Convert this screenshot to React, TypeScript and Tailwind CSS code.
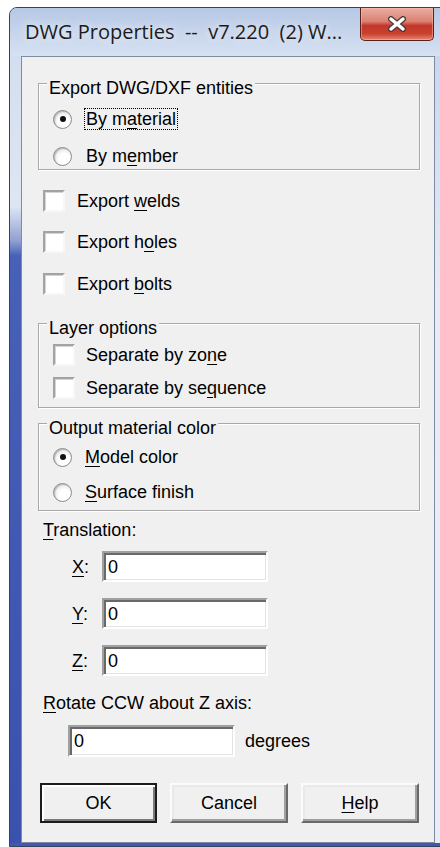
import type { ReactNode } from 'react';

const ui = "font-['Liberation_Sans',Arial,sans-serif] text-[18px] leading-[20px] text-black";

function Key({ children }: { children: ReactNode }) {
  return <span className="underline decoration-1 underline-offset-[3px]">{children}</span>;
}

function Radio({ checked }: { checked?: boolean }) {
  return (
    <span className="flex h-[19px] w-[19px] shrink-0 items-center justify-center rounded-full border border-[#8c8c8c] bg-[radial-gradient(circle_at_60%_65%,#ffffff_35%,#d6d6d6_100%)] shadow-[inset_1px_1px_1px_#b8b8b8]">
      {checked && <span className="h-[6px] w-[6px] rounded-full bg-[#111]" />}
    </span>
  );
}

function CheckBox() {
  return (
    <span className="h-[22px] w-[22px] shrink-0 border-2 border-t-[#a3a3a3] border-l-[#a3a3a3] border-r-[#f7f7f7] border-b-[#f7f7f7] bg-white shadow-[inset_1px_1px_0_#d4d4d4]" />
  );
}

function Field({ value, className }: { value: string; className: string }) {
  return (
    <div
      className={`flex items-center border-2 border-t-[#a0a0a0] border-l-[#a0a0a0] border-r-white border-b-white bg-white pl-[4px] shadow-[inset_2px_2px_0_#696969,inset_-1px_-1px_0_#e3e3e3] ${className}`}
    >
      {value}
    </div>
  );
}

function Group({ title, className, children }: { title: ReactNode; className: string; children: ReactNode }) {
  return (
    <div className={`ml-[16px] w-[382px] border border-[#a8a8a8] shadow-[inset_1px_1px_0_#fff,1px_1px_0_#fff] ${className}`}>
      <div className="-mt-[6px] ml-[8px] w-fit bg-[#f0f0f0] px-[2px]">{title}</div>
      {children}
    </div>
  );
}

function Button({ children, isDefault }: { children: ReactNode; isDefault?: boolean }) {
  if (isDefault) {
    return (
      <div className="flex h-[40px] w-[117px] items-center justify-center border-2 border-[#1c1c1c] bg-[#f0f0f0] shadow-[inset_2px_2px_0_#fff,inset_-2px_-2px_0_#7a7a7a]">
        {children}
      </div>
    );
  }
  return (
    <div className="flex h-[40px] w-[118px] items-center justify-center border-2 border-t-[#fbfbfb] border-l-[#fbfbfb] border-r-[#696969] border-b-[#696969] bg-[#f0f0f0] shadow-[inset_-2px_-2px_0_#a0a0a0,inset_2px_2px_0_#e9e9e9]">
      {children}
    </div>
  );
}

export default function App() {
  return (
    <div className="h-[847px] w-[440px] overflow-hidden bg-white">
      <div className="ml-[9px] mt-[7px] flex h-[840px] w-[440px] flex-col overflow-hidden rounded-t-[8px] border border-[#34425c] bg-[#cfdbef]">
        {/* caption */}
        <div className="flex h-[48px] shrink-0 items-start bg-[linear-gradient(to_bottom,#b7c8e5,#d6e1f2)]">
          <span className="mt-[10px] flex-1 whitespace-pre pl-[15px] font-['Open_Sans',sans-serif] text-[20px] leading-[28px] text-[#1b1b1b] [text-shadow:0_0_8px_rgba(255,255,255,0.9)]">
            DWG Properties  --  v7.220  (2) W...
          </span>
          <div className="mr-[14px] flex h-[33px] w-[74px] items-center justify-center rounded-b-[5px] border border-t-0 border-[#5a211a] bg-[linear-gradient(to_bottom,#e9aea2_0%,#dc8172_42%,#c3372a_55%,#c9402d_80%,#e28a72_100%)] shadow-[inset_0_0_0_1px_rgba(255,190,170,0.5)]">
            <svg width="22" height="16" viewBox="0 0 22 16">
              <path d="M5 3 L17 13 M17 3 L5 13" stroke="#4a3a3a" strokeWidth="6" strokeLinecap="round" />
              <path d="M5 3 L17 13 M17 3 L5 13" stroke="#ffffff" strokeWidth="3.5" strokeLinecap="round" />
            </svg>
          </div>
        </div>

        <div className="flex h-[787px] shrink-0">
          {/* left frame */}
          <div className="w-[11px] shrink-0 bg-[linear-gradient(to_bottom,#d3def0_0px,#dfe6f3_150px,#8fa0d2_185px,#4760b8_200px,#3b52ac_100%)]" />

          {/* client area */}
          <div className={`flex w-[414px] shrink-0 flex-col border border-[#7f8ba3] bg-[#f0f0f0] ${ui}`}>
            <Group title="Export DWG/DXF entities" className="mt-[26px] pb-[2px]">
              <div className="mt-[10px] flex h-[22px] items-center pl-[14px]">
                <Radio checked />
                <span className="ml-[12px] border border-dotted border-black px-[1px]">
                  By m<Key>a</Key>terial
                </span>
              </div>
              <div className="mt-[15px] flex h-[22px] items-center pl-[14px]">
                <Radio />
                <span className="ml-[12px] border border-transparent px-[1px]">
                  By m<Key>e</Key>mber
                </span>
              </div>
            </Group>

            <div className="ml-[21px] mt-[20px] flex h-[22px] items-center gap-[12px]">
              <CheckBox />
              <span>
                Export <Key>w</Key>elds
              </span>
            </div>
            <div className="ml-[21px] mt-[19px] flex h-[22px] items-center gap-[12px]">
              <CheckBox />
              <span>
                Export h<Key>o</Key>les
              </span>
            </div>
            <div className="ml-[21px] mt-[20px] flex h-[22px] items-center gap-[12px]">
              <CheckBox />
              <span>
                Export <Key>b</Key>olts
              </span>
            </div>

            <Group title="Layer options" className="mt-[28px] pb-[8px]">
              <div className="mt-[6px] flex h-[22px] items-center gap-[11px] pl-[14px]">
                <CheckBox />
                <span>
                  Separate by zo<Key>n</Key>e
                </span>
              </div>
              <div className="mt-[11px] flex h-[22px] items-center gap-[11px] pl-[14px]">
                <CheckBox />
                <span>
                  Separate by se<Key>q</Key>uence
                </span>
              </div>
            </Group>

            <Group title="Output material color" className="mt-[15px] pb-[7px]">
              <div className="mt-[8px] flex h-[22px] items-center pl-[14px]">
                <Radio checked />
                <span className="ml-[13px]">
                  <Key>M</Key>odel color
                </span>
              </div>
              <div className="mt-[13px] flex h-[22px] items-center pl-[14px]">
                <Radio />
                <span className="ml-[13px]">
                  <Key>S</Key>urface finish
                </span>
              </div>
            </Group>

            <div className="ml-[21px] mt-[9px]">
              <Key>T</Key>ranslation:
            </div>
            <div className="mt-[11px] flex items-center">
              <span className="ml-[50px] w-[30px]">
                <Key>X</Key>:
              </span>
              <Field value="0" className="h-[31px] w-[166px]" />
            </div>
            <div className="mt-[16px] flex items-center">
              <span className="ml-[50px] w-[30px]">
                <Key>Y</Key>:
              </span>
              <Field value="0" className="h-[31px] w-[166px]" />
            </div>
            <div className="mt-[16px] flex items-center">
              <span className="ml-[50px] w-[30px]">
                <Key>Z</Key>:
              </span>
              <Field value="0" className="h-[31px] w-[166px]" />
            </div>

            <div className="ml-[21px] mt-[17px]">
              <Key>R</Key>otate CCW about Z axis:
            </div>
            <div className="ml-[46px] mt-[12px] flex items-center gap-[10px]">
              <Field value="0" className="h-[32px] w-[167px]" />
              <span>degrees</span>
            </div>

            <div className="ml-[18px] mt-[26px] flex gap-[13px]">
              <Button isDefault>OK</Button>
              <Button>Cancel</Button>
              <Button>
                <Key>H</Key>elp
              </Button>
            </div>
          </div>

          {/* right frame */}
          <div className="flex-1 bg-[linear-gradient(to_bottom,#c9d7ee,#e6ecf5_30%,#e9eef6)]" />
        </div>

        {/* bottom frame */}
        <div className="flex-1 bg-[#4257b3]" />
      </div>
    </div>
  );
}
